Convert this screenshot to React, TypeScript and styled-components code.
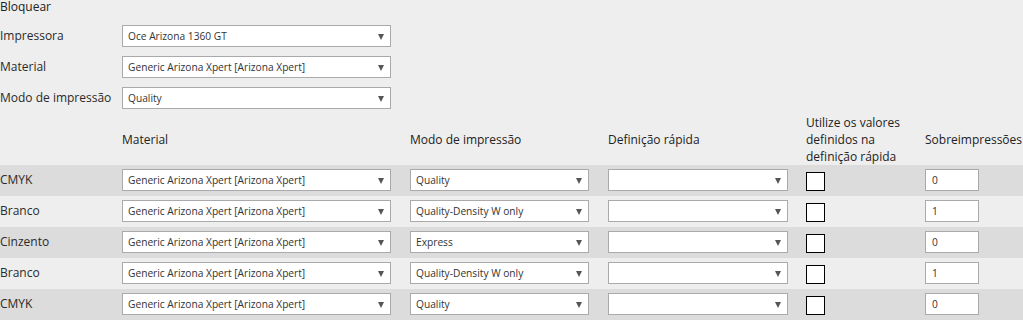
import React from 'react';
import styled, { createGlobalStyle } from 'styled-components';

const GlobalStyle = createGlobalStyle`
  html, body {
    margin: 0;
    padding: 0;
    background: #eeeeee;
    font-family: 'Open Sans', 'Noto Sans', sans-serif;
    color: #333;
  }
`;

const Page = styled.div`
  width: 1023px;
  height: 320px;
  overflow: hidden;
  background: #eeeeee;
`;

const Title = styled.div`
  font-size: 12px;
  line-height: 13px;
  height: 13px;
  margin-bottom: 8px;
  color: #222;
`;

const FormBlock = styled.div`
  height: 93px;
`;

const FormRow = styled.div`
  display: grid;
  grid-template-columns: 122px 269px;
  align-items: start;
  height: 31px;
  padding-top: 4px;
  box-sizing: border-box;
`;

const Label = styled.div`
  font-size: 12px;
  line-height: 22px;
  white-space: nowrap;
  color: #2a2a2a;
`;

const SelectBox = styled.div<{ $w: number }>`
  position: relative;
  box-sizing: border-box;
  width: ${(p) => p.$w}px;
  height: 22px;
  border: 1px solid #aaaaaa;
  background: #fff;
  padding: 0 18px 0 5px;
  font-size: 10.2px;
  line-height: 20px;
  color: #333;
  white-space: nowrap;
  overflow: hidden;
  &::after {
    content: '';
    position: absolute;
    right: 6px;
    top: 8px;
    border-left: 3px solid transparent;
    border-right: 3px solid transparent;
    border-top: 6px solid #555;
  }
`;

const HeaderRow = styled.div`
  display: grid;
  grid-template-columns: 122px 288px 198px 198px 119px 1fr;
  align-items: center;
  height: 51px;
`;

const HeaderCell = styled.div<{ $narrow?: boolean }>`
  font-size: 12px;
  line-height: 17px;
  color: #222;
  max-width: ${(p) => (p.$narrow ? '108px' : 'none')};
  white-space: ${(p) => (p.$narrow ? 'normal' : 'nowrap')};
`;

const Row = styled.div<{ $shade: boolean }>`
  display: grid;
  grid-template-columns: 122px 288px 198px 198px 119px 1fr;
  align-items: start;
  padding-top: 4px;
  box-sizing: border-box;
  height: 31px;
  background: ${(p) => (p.$shade ? '#dcdcdc' : '#eeeeee')};
`;

const Check = styled.span`
  display: block;
  box-sizing: border-box;
  width: 19px;
  height: 19px;
  border: 1px solid #000;
  background: #fff;
  margin-top: 3px;
`;

const NumberBox = styled.div`
  box-sizing: border-box;
  width: 54px;
  height: 22px;
  border: 1px solid #aaaaaa;
  background: #fff;
  padding-left: 6px;
  font-size: 10.2px;
  line-height: 20px;
  color: #333;
`;

const rows = [
  { name: 'CMYK', mode: 'Quality', over: '0' },
  { name: 'Branco', mode: 'Quality-Density W only', over: '1' },
  { name: 'Cinzento', mode: 'Express', over: '0' },
  { name: 'Branco', mode: 'Quality-Density W only', over: '1' },
  { name: 'CMYK', mode: 'Quality', over: '0' },
];

const material = 'Generic Arizona Xpert [Arizona Xpert]';

const App: React.FC = () => (
  <Page>
    <GlobalStyle />
    <Title>Bloquear</Title>
    <FormBlock>
      <FormRow>
        <Label>Impressora</Label>
        <SelectBox $w={269}>Oce Arizona 1360 GT</SelectBox>
      </FormRow>
      <FormRow>
        <Label>Material</Label>
        <SelectBox $w={269}>{material}</SelectBox>
      </FormRow>
      <FormRow>
        <Label>Modo de impressão</Label>
        <SelectBox $w={269}>Quality</SelectBox>
      </FormRow>
    </FormBlock>
    <HeaderRow>
      <HeaderCell />
      <HeaderCell>Material</HeaderCell>
      <HeaderCell>Modo de impressão</HeaderCell>
      <HeaderCell>Definição rápida</HeaderCell>
      <HeaderCell $narrow>Utilize os valores definidos na definição rápida</HeaderCell>
      <HeaderCell>Sobreimpressões</HeaderCell>
    </HeaderRow>
    {rows.map((r, i) => (
      <Row key={i} $shade={i % 2 === 0}>
        <Label>{r.name}</Label>
        <SelectBox $w={269}>{material}</SelectBox>
        <SelectBox $w={179}>{r.mode}</SelectBox>
        <SelectBox $w={180}></SelectBox>
        <Check />
        <NumberBox>{r.over}</NumberBox>
      </Row>
    ))}
  </Page>
);

export default App;
